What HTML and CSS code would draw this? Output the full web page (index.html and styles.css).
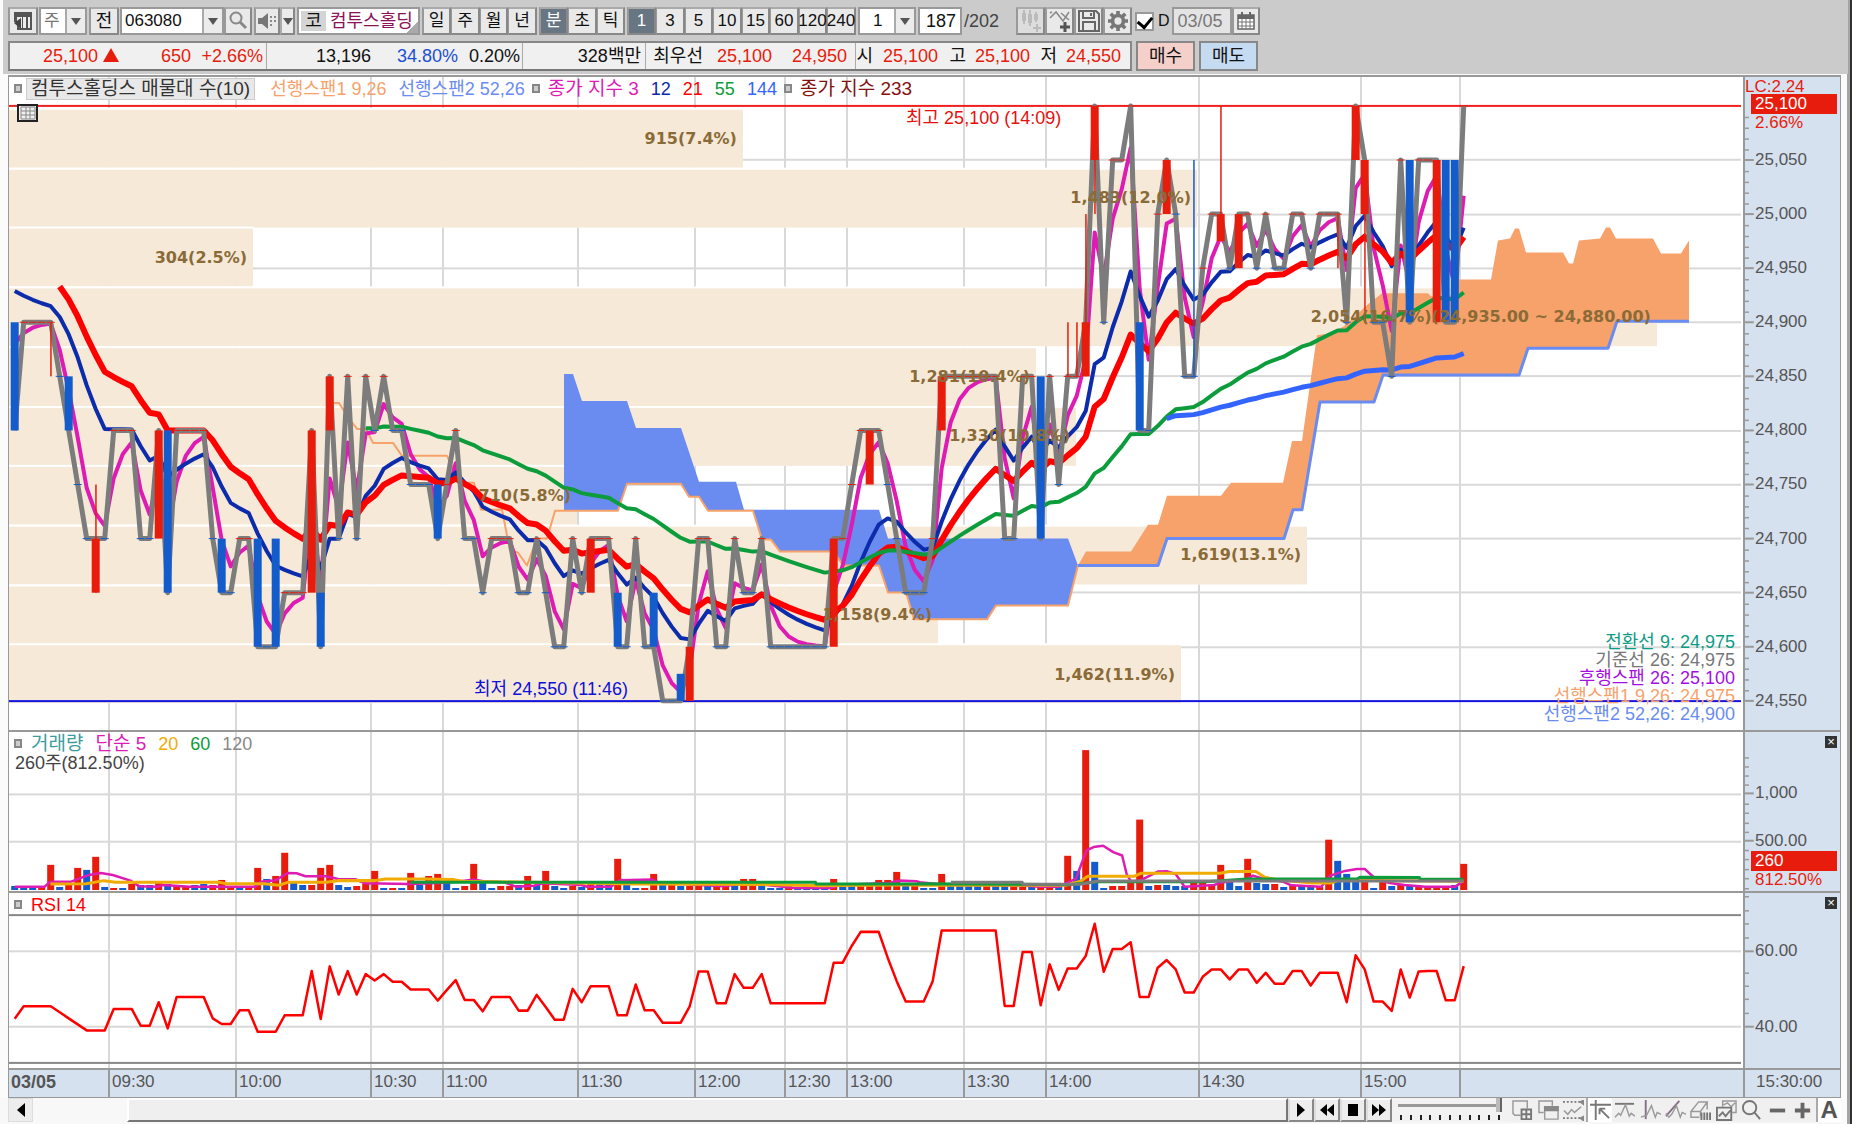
FILE: index.html
```html
<!DOCTYPE html>
<html lang="ko">
<head>
<meta charset="utf-8">
<title>컴투스홀딩스 063080</title>
<link rel="stylesheet" href="styles.css">
</head>
<body>
<header class="toolbar">
  <div class="controls">
    <button class="btn w30" aria-label="패널"><svg width="18" height="20" viewBox="0 0 18 20"><path d="M0 1h18v18H3v-4h2v2h3V6H3v5H0z" fill="#555"/><path d="M9 6h3v11H9zM14 6h2v11h-2z" fill="#eee"/><path d="M0 12l7-5v11z" fill="#444"/></svg></button>
    <div class="combo gap-xs"><select class="w24 dim" aria-label="종목 구분"><option>주</option></select><span class="drop w22"></span></div>
    <button class="btn w30 gap-s">전</button>
    <div class="combo gap-xs"><input class="w82" type="text" value="063080" aria-label="종목코드"><span class="drop w22"></span></div>
    <button class="btn w28" aria-label="검색"><svg width="20" height="20" viewBox="0 0 20 20" fill="none" stroke="#888"><circle cx="8" cy="7" r="5.5" stroke-width="2"/><path d="M12 11l6 6" stroke-width="3"/></svg></button>
    <button class="btn w26 gap-s" aria-label="소리"><svg width="20" height="18" viewBox="0 0 20 18"><path d="M1 6h4l6-5v16l-6-5H1z" fill="#777"/><path d="M13 5h2M13 9h2M13 13h2M17 5h2M17 9h2" stroke="#888" stroke-width="2"/></svg></button>
    <button class="btn drop w15" aria-label="소리 메뉴"></button>
    <div class="stock gap-s"><span class="chip">코</span><span class="name">컴투스홀딩</span></div>
    <div class="group gap-s"><button class="btn">일</button><button class="btn">주</button><button class="btn">월</button><button class="btn">년</button></div>
    <div class="group gap-s"><button class="btn on">분</button><button class="btn">초</button><button class="btn">틱</button></div>
    <div class="group gap-s"><button class="btn on">1</button><button class="btn">3</button><button class="btn">5</button><button class="btn">10</button><button class="btn">15</button><button class="btn">60</button><button class="btn">120</button><button class="btn">240</button></div>
    <div class="combo gap-s"><select class="w36 mid" aria-label="간격"><option>1</option></select><span class="drop w22"></span></div>
    <input class="w44 box right gap-s" type="text" value="187" aria-label="표시 개수">
    <span class="total">/202</span>
    <div class="tools">
      <button class="btn" aria-label="봉 추가" disabled><svg width="24" height="24" viewBox="0 0 24 24"><path d="M5 1v14M11 1v16M17 3v10" stroke="#bbb" stroke-width="2"/><path d="M3 4h4v8H3zM9 5h4v9H9zM15 5h4v6h-4z" fill="#bbb"/><path d="M14 19h8M18 15v8" stroke="#bbb" stroke-width="2"/></svg></button>
      <button class="btn" aria-label="지표 추가"><svg width="24" height="24" viewBox="0 0 24 24" fill="none"><path d="M2 9l6-6 7 9 6-9M2 4l2-1M13 4l8 7" stroke="#888" stroke-width="1.5"/><path d="M12 18h10M17 13v10" stroke="#555" stroke-width="3"/></svg></button>
      <button class="btn" aria-label="저장"><svg width="22" height="22" viewBox="0 0 22 22" fill="none" stroke="#666" stroke-width="2"><path d="M1 1h17l3 3v17H1z"/><path d="M5 1v7h11V1M5 21v-9h12v9M13 3v3"/></svg></button>
      <button class="btn" aria-label="설정"><svg width="20" height="20" viewBox="0 0 22 22" fill="none" stroke="#777"><circle cx="11" cy="11" r="6" stroke-width="4"/><path d="M11 0v4M11 18v4M0 11h4M18 11h4M3 3l3 3M16 16l3 3M3 19l3-3M16 6l3-3" stroke-width="4"/></svg></button>
    </div>
    <label class="check"><input type="checkbox" checked><span>D</span></label>
    <input class="w60 box dim flat" type="text" value="03/05" aria-label="날짜">
    <button class="btn w28" aria-label="달력"><svg width="18" height="18" viewBox="0 0 18 18"><path d="M1 3h16v14H1z" fill="#fff" stroke="#666" stroke-width="1.5"/><path d="M1 3h16v4H1zM4 0h2v4H4zM12 0h2v4h-2z" fill="#666"/><path d="M5 7v10M9 7v10M13 7v10M1 10h16M1 14h16" stroke="#777"/></svg></button>
  </div>
  <div class="quotes">
    <div class="strip">
      <div class="cell price up"><b>25,100<i class="tri"></i></b><b>650</b><b>+2.66%</b></div>
      <div class="cell amount"><b>13,196</b><b class="down">34.80%</b><b>0.20%</b></div>
      <div class="cell value"><b>328백만</b></div>
      <div class="cell best"><b>최우선</b><b class="up">25,100</b><b class="up">24,950</b></div>
      <div class="cell range"><b>시</b><b class="up">25,100</b><b>고</b><b class="up">25,100</b><b>저</b><b class="up">24,550</b></div>
    </div>
    <button class="trade buy">매수</button>
    <button class="trade sell">매도</button>
  </div>
</header>

<main class="chart">
  <section class="panel main">
    <div class="plot">
      <svg class="draw" id="main-plot" preserveAspectRatio="none" viewBox="9 77 1734 655"></svg>
      <div class="marks" id="main-marks"></div>
      <div class="legend">
        <i class="sq"></i><span class="title">컴투스홀딩스 매물대 수(10)</span>
        <span class="c-span1">선행스팬1 9,26</span><span class="c-span2">선행스팬2 52,26</span>
        <i class="sq near"></i><span class="c-ma3">종가 지수 3</span><span class="c-ma12">12</span><span class="c-ma21">21</span><span class="c-ma55">55</span><span class="c-ma144">144</span>
        <i class="sq near"></i><span class="c-ma233">종가 지수 233</span>
      </div>
      <button class="gridbtn" aria-label="표 보기"><svg width="16" height="14" viewBox="0 0 16 14"><path d="M1 1h14v12H1zM1 5h14M1 9h14M6 1v12M10 1v12" fill="none" stroke="#888"/></svg></button>
      <div class="values">
        <span class="v1">전환선 9: 24,975</span><span class="v2">기준선 26: 24,975</span><span class="v3">후행스팬 26: 25,100</span><span class="c-span1">선행스팬1 9,26: 24,975</span><span class="c-span2">선행스팬2 52,26: 24,900</span>
      </div>
    </div>
    <div class="axis">
      <svg class="draw" id="main-ticks" preserveAspectRatio="none" viewBox="1743 77 97 655"></svg>
      <div class="marks" id="main-labels"></div>
      <div class="now"><span class="lc">LC:2.24</span><span class="tag">25,100</span><span class="pct">2.66%</span></div>
    </div>
  </section>

  <section class="panel volume">
    <div class="plot">
      <svg class="draw" id="vol-plot" preserveAspectRatio="none" viewBox="9 734 1734 158"></svg>
      <div class="legend"><i class="sq lone"></i><span class="v4">거래량</span><span class="c-ma3">단순 5</span><span class="c-y">20</span><span class="c-ma55">60</span><span class="c-g">120</span></div>
      <p class="sub">260주(812.50%)</p>
    </div>
    <div class="axis">
      <svg class="draw" id="vol-ticks" preserveAspectRatio="none" viewBox="1743 734 97 158"></svg>
      <div class="marks" id="vol-labels"></div>
      <div class="now low"><span class="tag">260</span><span class="pct">812.50%</span></div>
      <button class="close" aria-label="거래량 닫기">×</button>
    </div>
  </section>

  <section class="panel rsi">
    <div class="plot">
      <svg class="draw" id="rsi-plot" preserveAspectRatio="none" viewBox="9 894 1734 174"></svg>
      <div class="legend"><i class="sq lone"></i><span class="rsi-name">RSI 14</span></div>
    </div>
    <div class="axis">
      <svg class="draw" id="rsi-ticks" preserveAspectRatio="none" viewBox="1743 894 97 174"></svg>
      <div class="marks" id="rsi-labels"></div>
      <button class="close" aria-label="RSI 닫기">×</button>
    </div>
  </section>

  <div class="times">
    <strong>03/05</strong><span>09:30</span><span>10:00</span><span>10:30</span><span>11:00</span><span>11:30</span><span>12:00</span><span>12:30</span><span>13:00</span><span>13:30</span><span>14:00</span><span>14:30</span><span>15:00</span><span></span><span class="last">15:30:00</span>
  </div>
</main>

<footer class="bottom">
  <button class="arrow" aria-label="왼쪽으로"><svg width="8" height="14" viewBox="0 0 8 14"><path d="M8 0v14L0 7z"/></svg></button>
  <div class="track"><div class="thumb"></div></div>
  <div class="play">
    <button aria-label="재생"><svg width="8" height="14" viewBox="0 0 8 14"><path d="M0 0v14l8-7z"/></svg></button>
    <button aria-label="뒤로"><svg width="14" height="12" viewBox="0 0 14 12"><path d="M7 0v12L0 6zM14 0v12L7 6z"/></svg></button>
    <button aria-label="정지"><svg width="12" height="12" viewBox="0 0 12 12"><path d="M1 0h10v12H1z"/></svg></button>
    <button aria-label="앞으로"><svg width="14" height="12" viewBox="0 0 14 12"><path d="M0 0v12l7-6zM7 0v12l7-6z"/></svg></button>
  </div>
  <div class="speed"><input type="range" min="0" max="10" value="10" aria-label="속도"><div class="ticks"><i></i><i></i><i></i><i></i><i></i><i></i><i></i><i></i><i></i><i></i><i></i></div></div>
  <div class="icons">
    <button aria-label="창 추가"><svg viewBox="0 0 22 22"><path d="M9 16H3l-2-2V1h15v8" /><path d="M10 10h10v10H10zM15 10v10M10 15h10" class="d"/></svg></button>
    <button aria-label="창 복사"><svg viewBox="0 0 22 22"><path d="M6 13H1V1h14v5"/><path d="M7 7h14v13H7z"/><path d="M7 7h14v4H7z" class="f"/></svg></button>
    <button aria-label="범위"><svg viewBox="0 0 22 22"><path d="M0 2h18M0 19h18" stroke-dasharray="2 2" class="d"/><path d="M22 0v5l-4-3zM22 17v5l-4-3z" class="f"/><path d="M1 11l4 4 4-5 3 3 7-6"/></svg></button>
    <button class="active" aria-label="십자선"><svg viewBox="0 0 22 22"><path d="M0 5h22M6 0v21" class="d"/><path d="M10 9h6M10 9v6M10 9l10 10" class="d"/></svg></button>
    <button aria-label="수평선"><svg viewBox="0 0 22 22"><path d="M1 4h20" class="d"/><path d="M1 18l4-4 2 2 5-11 4 12 2-3 4 3"/></svg></button>
    <button aria-label="수직선"><svg viewBox="0 0 22 22"><path d="M6 0v20" class="p"/><path d="M1 18l6-2 5-10 4 12 2-5 4 2"/></svg></button>
    <button aria-label="추세선"><svg viewBox="0 0 22 22"><path d="M1 17L15 1" class="p"/><path d="M1 14l3 4 3-3 5-9 4 12 2-5 4 2"/></svg></button>
    <button aria-label="모두 지우기"><svg viewBox="0 0 22 22"><path d="M1 12l8-10h9l-7 10zM1 12v6h9M18 2v8M11 12v5"/><path d="M12 13v8M15 13v8M18 13v8M21 13v8" class="d"/></svg></button>
    <button aria-label="차트 겹치기"><svg viewBox="0 0 22 22"><path d="M7 7V1h14v12h-4M8 5l4-2 4 4 4-4"/><path d="M1 8h15v13H1zM3 17l4-4 3 4 5-6" class="d"/></svg></button>
    <button aria-label="돋보기"><svg viewBox="0 0 22 22"><circle cx="9" cy="8" r="7" class="d"/><path d="M14 13l6 7" stroke-width="3" class="d"/></svg></button>
    <button aria-label="축소"><svg viewBox="0 0 22 22"><path d="M3 11h16" class="w"/></svg></button>
    <button aria-label="확대"><svg viewBox="0 0 22 22"><path d="M3 11h16M11 3v16" class="w"/></svg></button>
    <button class="active letter">A</button>
  </div>
</footer>
<script src="chart.js"></script>
</body>
</html>
```

FILE: styles.css
```css
* { box-sizing: border-box; }
body {
  margin: 0;
  min-height: 100vh;
  display: flex;
  flex-direction: column;
  padding-right: 11px;
  background: linear-gradient(to left, #333 2px, #a5a5a5 2px, #a5a5a5 5px, #fbfbfb 5px);
  font: 18px/20px "Liberation Sans", "Noto Sans CJK KR", sans-serif;
  color: #111;
}
button, input, select { font: inherit; color: inherit; margin: 0; border-radius: 0; }

/* toolbar */
.toolbar { background: #cbcbcb; margin: 0 -7px 1px 3px; padding: 7px 0 3px 5px; }
.controls { display: flex; height: 28px; }
.btn {
  display: flex; align-items: center; justify-content: center;
  height: 28px; padding: 0; background: #e9e9e9;
  border: 2px solid; border-color: #aaa #888 #888 #999;
  white-space: nowrap;
}
.btn.on { background: #687684; color: #fff; }
.btn svg { flex: none; }
.btn:disabled { background: #ddd; }
.gap-xs { margin-left: 1px; }
.gap-s { margin-left: 2px; }
.w15 { width: 15px; } .w22 { width: 22px; } .w24 { width: 24px; } .w26 { width: 26px; } .w28 { width: 28px; }
.w30 { width: 30px; } .w36 { width: 36px; } .w44 { width: 44px; } .w60 { width: 60px; } .w82 { width: 82px; }
.combo { display: flex; border: 2px solid #999; background: #fff; height: 28px; }
.combo input, .combo select {
  appearance: none; border: 0; background: #fff; padding: 0 3px; outline: 0; font-size: 17px;
}
.combo .mid { padding-left: 13px; }
.dim, .combo .dim { color: #777; }
.drop { display: flex; align-items: center; justify-content: center; background: #ececec; border-left: 2px solid #aaa; }
.drop::before { content: ""; border: 5px solid transparent; border-top: 7px solid #555; border-bottom: 0; }
.combo .w22 { width: 20px; }
.combo .w82 { width: 80px; }
.combo .w36 { width: 34px; }
.box { border: 2px solid #999; background: #fff; padding: 0 4px; height: 28px; }
.right { text-align: right; }
.flat { background: #e4e4e4; }
.stock {
  display: flex; align-items: center; width: 123px; padding: 0 2px; overflow: hidden;
  border: 2px solid #999; background: linear-gradient(135deg, #fff 92%, #aaa 92%); white-space: nowrap;
}
.stock .chip { background: #d4d4d4; width: 25px; text-align: center; margin-right: 4px; }
.stock .name { color: #8c1257; }
.group { display: flex; font-size: 17px; }
.group .btn { width: 29px; }
.group .btn + .btn { border-left-width: 1px; width: 28px; }
.group .btn:nth-child(2n) { width: 29px; }
.total { width: 52px; padding: 4px 2px; color: #444; }
.tools { display: flex; margin-left: 2px; }
.tools .btn { width: 29px; }
.check { display: flex; align-items: center; gap: 4px; margin: 0 2px 0 3px; font-size: 16px; }
.check input {
  appearance: none; width: 19px; height: 19px; border: 2px solid #999; background: #fff; display: grid; place-items: center;
}
.check input:checked::before {
  content: ""; width: 7px; height: 11px; border: solid #000; border-width: 0 3px 3px 0; transform: rotate(40deg);
}
.quotes { display: flex; height: 30px; margin-top: 6px; gap: 4px; }
.strip { display: flex; width: 1124px; background: #f0f0f0; border: 2px solid #888; border-bottom-color: #777; }
.cell { display: grid; align-items: center; border-left: 1px solid #aaa; justify-items: end; white-space: nowrap; }
.cell:first-child { border-left: 0; }
.cell b { font-weight: normal; }
.price { width: 256px; grid-template-columns: 109px 72px 72px; }
.amount { width: 256px; grid-template-columns: 104px 87px 62px; }
.value { width: 123px; padding-right: 4px; }
.best { width: 210px; grid-template-columns: 57px 69px 75px; }
.range { flex: 1; grid-template-columns: 17px 65px 28px 64px 27px 64px; }
.up { color: #e81c0c; }
.down { color: #1c4fd0; }
.tri { display: inline-block; margin-left: 5px; border: 8px solid transparent; border-bottom: 14px solid #e81c0c; border-top: 0; }
.trade { width: 59px; padding: 0; border: 2px solid #888; }
.buy { background: #f5cfc9; }
.sell { background: #c5dbf1; }

/* chart */
.chart { flex: 1; display: flex; flex-direction: column; margin-left: 8px; border: 1px solid #999; border-top-width: 2px; background: #fff; }
.panel { display: grid; grid-template-columns: 1fr 97px; border-bottom: 2px solid #999; min-height: 90px; }
.panel.main { flex: 657 0 0; }
.panel.volume { flex: 160 0 0; }
.panel.rsi { flex: 176 0 0; }
.plot, .axis { position: relative; min-width: 0; }
.axis { background: #d6e1ef; border-left: 2px solid #999; color: #555; font-size: 17px; }
.draw, .marks { position: absolute; left: 0; top: 0; width: 100%; height: 100%; }
.marks span { position: absolute; transform: translateY(-50%); white-space: nowrap; }
.marks .band { font: bold 16px/20px "DejaVu Sans", sans-serif; color: #8a6b37; }
.marks .hi { color: #e8100c; }
.marks .lo { color: #1010d8; }
.axis .marks span { left: 10px; }
.legend { position: relative; display: flex; align-items: center; gap: 12px; padding: 1px 0 0 5px; height: 22px; white-space: nowrap; font-size: 19px; }
.legend .sq { width: 8px; height: 9px; border: 2px solid #888; background: #ccc; margin-right: -8px; flex: none; }
.legend .sq.near { margin: 0 -4px 0 -5px; }
.legend .sq.lone { margin-right: -3px; }
.legend .title { background: #e8e8e8; border: 1px solid #ccc; padding: 0 4px; margin-right: 3px; color: #333; }
.rsi-name { color: #f00; font-size: 18px; }
.c-span1 { color: #f7a26b; } .c-span2 { color: #6a8cf0; } .c-ma3 { color: #de1cb4; } .c-ma12 { color: #0c2cac; }
.c-ma21 { color: #f00; } .c-ma55 { color: #0c9c3c; } .c-ma144 { color: #3464ff; } .c-ma233 { color: #841010; }
.c-y { color: #f0ac04; } .c-g { color: #888; }
.legend .c-span1, .legend .c-span2, .c-ma12, .c-ma21, .c-ma55, .c-ma144, .c-y, .c-g { font-size: 18px; }
.v1 { color: #0c9c84; } .v2 { color: #777; } .v3 { color: #a410e0; } .v4 { color: #3c9c9c; }
.gridbtn { position: absolute; left: 8px; top: 27px; width: 21px; height: 18px; padding: 0; border: 2px solid #222; background: #eee; display: grid; place-items: center; }
.values { position: absolute; right: 8px; bottom: 7px; display: grid; justify-items: end; line-height: 18px; }
.now { position: absolute; left: 0; right: 3px; top: 0; display: grid; line-height: 18px; color: #e81c0c; }
.now .lc { height: 17px; line-height: 20px; }
.now .tag { background: #e81c0c; color: #fff; margin-left: 6px; padding-left: 4px; line-height: 20px; }
.now .pct { padding-left: 10px; }
.now.low { top: auto; bottom: 2px; }
.close { position: absolute; right: 3px; top: 4px; width: 12px; height: 12px; padding: 0; border: 0; background: #333; color: #fff; font-size: 13px; line-height: 12px; }
.sub { position: absolute; left: 6px; top: 21px; margin: 0; color: #444; }
.times {
  display: grid; height: 27px; background: #d6e1ef; color: #555; font-size: 17px; line-height: 24px;
  grid-template-columns: 99fr 127fr 135fr 72fr 135fr 117fr 90fr 62fr 117fr 82fr 153fr 162fr 99fr 284fr 97px;
}
.times span { border-left: 2px solid #999; padding-left: 2px; }
.times strong { font-size: 18px; padding-left: 2px; }
.times .last { padding-left: 11px; }

/* bottom bar */
.bottom { display: flex; height: 26px; padding: 0 0 2px 8px; background: #f8f8f8; }
.bottom button { display: grid; place-items: center; padding: 0; border: 0; background: #ededed; }
.bottom .arrow { width: 25px; border: 1px solid #ddd; }
.track { flex: 1; padding-left: 94px; }
.thumb { height: 100%; background: #efefef; border: 2px solid; border-color: #fff #777 #777 #fff; }
.play { display: flex; }
.bottom .play button { width: 26px; border: 2px solid; border-color: #fff #888 #888 #ddd; }
.speed { width: 118px; padding: 0 8px 0 6px; background: #f2f2f2; }
.speed input { appearance: none; display: block; width: 104px; height: 14px; background: linear-gradient(#999, #999) center / 100% 3px no-repeat; }
.speed input::-webkit-slider-thumb { appearance: none; width: 6px; height: 14px; background: #bbb; border-right: 2px solid #666; }
.ticks { display: flex; justify-content: space-between; padding: 3px 2px; }
.ticks i { width: 2px; height: 5px; background: #222; }
.icons { display: grid; grid-template-columns: repeat(13, 1fr); width: 331px; background: #f0f0f0; }
.bottom .icons button { background: none; }
.bottom .icons .active { background: #fff; border-left: 2px solid #aaa; }
.icons svg { width: 21px; height: 21px; fill: none; stroke: #999; stroke-width: 1.5; }
.icons .d { stroke: #777; stroke-width: 2; }
.icons .p { stroke: #867088; stroke-width: 2; }
.icons .f { fill: #888; stroke: #888; }
.icons .w { stroke: #666; stroke-width: 4; }
.bottom .letter { font-weight: bold; font-size: 24px; color: #555; }
```

FILE: chart.js
```js
// Intraday chart: closes, opens/highs/lows, cloud, volume and RSI.
const X0 = 14.7, STEP = 9;
const px = i => X0 + STEP * i;
const py = p => 106 + (25100 - p) * 1.085;
const SPLITS = [108, 235, 370, 442, 577, 694, 784, 846, 963, 1045, 1198, 1360, 1459];

// closes as [price offset from 24,000, repeat count]
const RUNS = [[800,1],[900,4],[850,1],[800,1],[750,1],[700,3],[800,3],[700,2],[800,1],[650,1],[800,4],[700,1],[650,2],
[700,2],[600,3],[650,3],[800,1],[600,1],[850,1],[700,1],[850,1],[700,1],[850,1],[800,1],[850,1],[800,2],[750,3],
[700,1],[750,1],[800,1],[700,2],[650,1],[700,3],[650,2],[700,1],[650,1],[600,2],[700,1],[650,1],[700,3],[600,2],
[700,1],[600,2],[550,3],[600,1],[700,2],[600,2],[700,1],[650,2],[700,1],[600,7],[700,2],[750,1],[800,3],[750,1],
[700,1],[650,3],[700,1],[850,7],[700,2],[850,2],[700,1],[850,1],[750,1],[850,2],[900,1],[1100,1],[900,1],[1050,2],
[1100,1],[800,2],[1000,1],[1050,1],[1000,1],[850,2],[950,1],[1000,2],[950,1],[1000,2],[950,1],[1000,1],[950,2],
[1000,2],[950,1],[1000,3],[900,1],[1100,1],[1050,1],[900,2],[850,1],[1050,1],[900,1],[1050,2],[1050,1],[900,2],[1100,1]];
const close = RUNS.flatMap(([p, n]) => Array(n).fill(24000 + p));
// bar index: [open, low wick, high wick]
const BARS = {0:[900],4:[900,850,900],6:[850],9:[650,650,750],16:[700],17:[800],23:[700],27:[700],29:[700],33:[650],34:[650],
35:[800],47:[750],64:[650],67:[650],71:[650],74:[575],75:[550],91:[600],95:[750],103:[800],114:[850],117:[850,850,900],
118:[850,850,900],119:[850,850,1000],120:[1050,1000,1100],125:[900],128:[1000],131:[850,850,1050],134:[975,975,1100],
136:[950],147:[1000,950,1000],149:[1050],150:[1000,900,1050],155:[1050],158:[900],159:[1050],160:[1050]};

const poly = (pts, color, w) =>
  `<polyline fill="none" stroke="${color}" stroke-width="${w}" stroke-linejoin="round" points="${pts.map(p => p.join()).join(' ')}"/>`;
const rect = (x, y, w, h, c) => `<rect x="${x}" y="${y}" width="${w}" height="${h}" fill="${c}"/>`;
const shape = (pts, c) => `<polygon fill="${c}" points="${pts.map(p => p.join()).join(' ')}"/>`;

const ema = (n, seed, from) => {
  let e = seed;
  const out = [[px(from), py(e)]];
  for (let i = from + 1; i < close.length; i++) {
    e += (close[i] - e) * 2 / (n + 1);
    out.push([px(i), py(e)]);
  }
  return out;
};

function grid(top, bottom, rows) {
  return SPLITS.map(x => rect(x, top, 2, bottom - top, '#d9d9d9')).join('') +
    rows.map(y => rect(9, y, 1732, 2, '#d9d9d9')).join('');
}

function drawMain() {
  const rows = [];
  for (let p = 25050; p > 24550; p -= 50) rows.push(Math.round(py(p)) - 1);
  let s = grid(77, 732, rows);
  const ends = [743, 1197, 253, 1657, 1036, 1076, 577, 1307, 938, 1181];
  const names = ['915(7.4%)', '1,483(12.0%)', '304(2.5%)', '2,054(16.7%)(24,935.00 ~ 24,880.00)', '1,281(10.4%)',
    '1,330(10.8%)', '710(5.8%)', '1,619(13.1%)', '1,158(9.4%)', '1,462(11.9%)'];
  ends.forEach((e, i) => {
    const y = Math.round(110 + 59.7 * i);
    s += rect(9, y - 2, e - 9, 60, '#fff') + rect(9, y, e - 9, 58, '#f6e9d7');
  });
  const span1 = [[330,404],[339,404],[348,418],[357,430],[366,430],[373,444],[393,444],[402,457],[447,457],[460,484],[474,484],
    [481,511],[502,511],[510,552],[518,554],[527,567],[537,540],[547,540],[555,512],[618,512],[627,485],[681,485],[689,498],
    [699,498],[708,512],[753,512],[762,541],[771,541],[780,553],[834,553],[843,567],[879,567],[888,594],[906,594],[914,621],
    [987,621],[996,607],[1068,607],[1078,567]];
  const top2 = [[564,375],[573,375],[582,402],[627,402],[636,429],[681,429],[699,483],[736,483],[744,511],[879,511],[888,540],
    [1068,540],[1078,567]];
  const low2 = [[1078,567],[1158,567],[1167,540],[1284,540],[1293,511],[1302,511],[1320,403],[1374,403],[1383,376],[1519,376],
    [1528,349],[1608,349],[1617,322],[1689,322]];
  const up1 = [[1078,567],[1086,553],[1131,553],[1148,526],[1158,526],[1167,497],[1221,497],[1231,484],[1283,484],[1292,442],
    [1302,442],[1317,336],[1330,334],[1344,327],[1368,305],[1382,294],[1428,294],[1431,297],[1450,297],[1459,280],[1491,280],
    [1498,241],[1510,239],[1515,229],[1519,229],[1526,253],[1563,253],[1569,264],[1573,264],[1579,241],[1600,239],[1606,228],
    [1610,228],[1616,239],[1653,239],[1661,254],[1681,254],[1689,241]];
  const cut = span1.filter(p => p[0] >= 564);
  s += shape([...top2, ...[[564,512], ...cut].reverse()], '#6a8cf0');
  s += shape([...up1, ...low2.slice().reverse()], '#f7a26b');
  s += poly(span1, '#f7a26b', 2) + poly(low2, '#6a8cf0', 3);
  s += rect(9, 105, 1732, 2, '#f02020') + rect(9, 702, 1732, 2, '#1414e0');
  s += poly(ema(3, 24880, 0), '#de1cb4', 4);
  s += poly(ema(12, 24929, 0), '#0c2cac', 4);
  s += poly(ema(21, 24933, 5), '#f00', 6);
  s += poly(ema(55, 24802, 39), '#0c9c3c', 4);
  s += poly(ema(144, 24811, 128), '#3464ff', 5);
  s += poly(close.map((c, i) => [px(i), py(c)]), '#7c7c7c', 5);
  let tone = '#145ccc';
  close.forEach((c, i) => {
    if (i && c > close[i - 1]) tone = '#e81c0c';
    if (i && c < close[i - 1]) tone = '#145ccc';
    const b = BARS[i];
    const o = b ? 24000 + b[0] : c;
    const col = i === 131 ? '#145ccc' : o === c ? tone : c > o ? '#e81c0c' : '#145ccc';
    if (b && b.length > 1) s += rect(px(i) - .5, py(24000 + b[2]), 1.5, (b[2] - b[1]) * 1.085, col);
    if (o === c) s += rect(px(i) - 4, py(c) - .5, 8, 1, col);
    else s += rect(px(i) - 4, py(Math.max(o, c)), 8, Math.abs(o - c) * 1.085, col);
  });
  document.getElementById('main-plot').innerHTML = s;

  const pctY = y => ((y - 77) / 655 * 100).toFixed(2);
  const pctX = x => ((x - 9) / 1734 * 100).toFixed(2);
  let m = ends.map((e, i) =>
    `<span class="band" style="right:${(100 - pctX(e - 6)).toFixed(2)}%;top:${pctY(139 + 59.7 * i)}%">${names[i]}</span>`).join('');
  m += `<span class="hi" style="left:${pctX(906)}%;top:${pctY(118)}%">최고 25,100 (14:09)</span>`;
  m += `<span class="lo" style="left:${pctX(474)}%;top:${pctY(691)}%">최저 24,550 (11:46)</span>`;
  document.getElementById('main-marks').innerHTML = m;
}

function axis(id, top, height, labels, minor) {
  document.getElementById(id + '-ticks').innerHTML =
    labels.map(l => rect(1743, l[0] - 1, 9, 2, '#999')).join('') + minor.map(y => rect(1743, y, 4, 1.5, '#999')).join('');
  document.getElementById(id + '-labels').innerHTML =
    labels.map(l => `<span style="top:${((l[0] - top) / height * 100).toFixed(2)}%">${l[1]}</span>`).join('');
}

// volume bars: height in px, sign gives the colour (negative = falling)
const VOL = [-3,-3,-3,3,24,-2,5,21,-19,32,-2,1,-1,5,-4,-4,7,-5,4,3,-4,-5,4,9,3,-3,3,21,-10,13,36,-7,-4,4,21,24,-4,-2,3,5,18,-1,
1,-1,16,-4,13,15,-6,-1,3,25,-6,-1,3,3,-4,13,-4,18,-3,-1,3,-2,6,-6,-5,30,-6,-1,1,15,-4,4,-3,3,4,-3,4,4,-5,10,10,-3,-1,-1,4,-1,
-5,-5,-3,10,-3,-3,3,4,9,9,17,-3,3,-1,-1,15,-4,-4,-5,-4,3,-4,-4,3,4,-3,3,3,-2,33,-18,138,-27,-1,3,3,6,69,-3,4,-4,-3,-3,8,8,3,
24,-8,-3,30,-6,-5,5,-2,4,-4,-3,2,49,-28,-15,-8,9,-1,8,-3,4,-4,3,2,3,3,-4,25];

function drawVolume() {
  const left = a => a.map(([x, y]) => [x / 1.686, 720 + y / 3]);
  const right = a => a.map(([x, y]) => [920 + x / 1.682, 720 + y / 3]);
  let s = grid(734, 892, [795, 842]);
  VOL.forEach((v, i) => { const h = Math.abs(v) + 1; s += rect(px(i) - 3.5, 891 - h, 7, h, v > 0 ? '#e81c0c' : '#145ccc'); });
  s += poly([...left([[25,503],[75,503],[85,488],[120,488],[150,468],[170,462],[190,468],[220,485],[235,502],[265,503],[275,498],
    [320,503],[430,503],[440,488],[465,484],[485,462],[500,463],[515,472],[550,472],[570,480],[600,481],[615,493],[690,495],
    [740,492],[770,488],[800,482],[815,487],[850,490],[870,503],[900,500],[915,493],[980,498],[990,503],[1030,503],[1045,484],[1100,482],
    [1110,490],[1180,498],[1220,502],[1260,492],[1320,503],[1340,507],[1400,507],[1420,497],[1500,492],[1515,485],[1545,487]]),
    ...right([[0,490],[40,497],[180,500],[200,503],[235,503],[245,493],[262,480],[280,395],[292,385],[308,381],[325,400],
    [340,410],[348,468],[355,487],[370,485],[400,458],[415,457],[430,465],[445,503],[495,498],[505,491],[550,480],[560,470],
    [575,478],[610,488],[625,499],[675,503],[690,470],[715,456],[735,450],[748,450],[765,478],[790,492],[815,498],[850,503],
    [900,503],[914,487]])], '#de1cb4', 2.5);
  s += poly([...left([[85,495],[145,494],[175,485],[195,490],[370,490],[380,494],[445,494],[470,499],[485,490],[550,490],[570,485],
    [630,485],[650,480],[720,480],[765,482],[780,487],[870,489],[1070,495],[1310,497],[1380,500],[1545,497]]),
    ...right([[0,499],[245,499],[270,487],[282,472],[360,472],[372,463],[505,463],[520,458],[565,458],[580,475],[600,482],
    [660,492],[690,492],[705,484],[914,487]])], '#f0ac04', 3);
  s += poly([...left([[692,490],[1375,490],[1376,495],[1545,495]]),
    ...right([[0,494],[250,497],[300,488],[480,488],[550,480],[735,480],[740,475],[840,476],[841,481],[914,481]])], '#0c9c3c', 3);
  s += poly(right([[52,490],[172,490],[173,496],[270,496],[300,486],[914,486]]), '#7c7c7c', 3);
  document.getElementById('vol-plot').innerHTML = s;
}

// RSI trace, one value per bar
const RSI = [897,860,860,860,860,878,896,914,932,932,932,868,868,868,918,918,848,926,832,832,832,832,896,913,913,872,872,936,
936,936,887,887,887,755,898,741,825,755,825,764,783,764,787,787,810,810,810,843,812,782,841,841,875,832,832,832,873,873,826,
862,900,900,808,848,800,800,800,887,887,795,872,872,909,909,909,860,756,756,851,851,764,805,805,764,851,851,851,851,851,851,
851,730,730,680,638,638,638,715,785,846,846,846,785,634,634,634,634,634,634,634,859,859,698,698,857,735,811,747,747,710,614,
757,689,689,669,832,832,745,722,750,819,819,772,750,750,780,750,750,790,760,793,793,755,755,798,760,760,760,848,708,750,846,
846,874,750,834,756,755,755,842,842,740];

function drawRsi() {
  let s = grid(894, 1068, [951, 1026]);
  s += rect(9, 915, 1732, 2, '#888') + rect(9, 1062, 1732, 2, '#888');
  s += poly(RSI.map((v, i) => [px(i), 720 + v / 3]), '#f00', 2.5);
  document.getElementById('rsi-plot').innerHTML = s;
}

drawMain();
drawVolume();
drawRsi();

const prices = [], minors = [];
for (let p = 25050; p >= 24550; p -= 50) prices.push([py(p), p.toLocaleString('en-US')]);
for (let p = 25090; p > 24540; p -= 10) if (p % 50) minors.push(py(p));
axis('main', 77, 655, prices, minors);
axis('vol', 734, 158, [[795, '1,000'], [842, '500.00']], [759, 768, 777, 786, 805, 814, 824, 833, 851, 860, 870, 879, 889]);
axis('rsi', 894, 174, [[952, '60.00'], [1027, '40.00']], [897, 911, 924, 938, 973, 986, 999, 1013]);
```
